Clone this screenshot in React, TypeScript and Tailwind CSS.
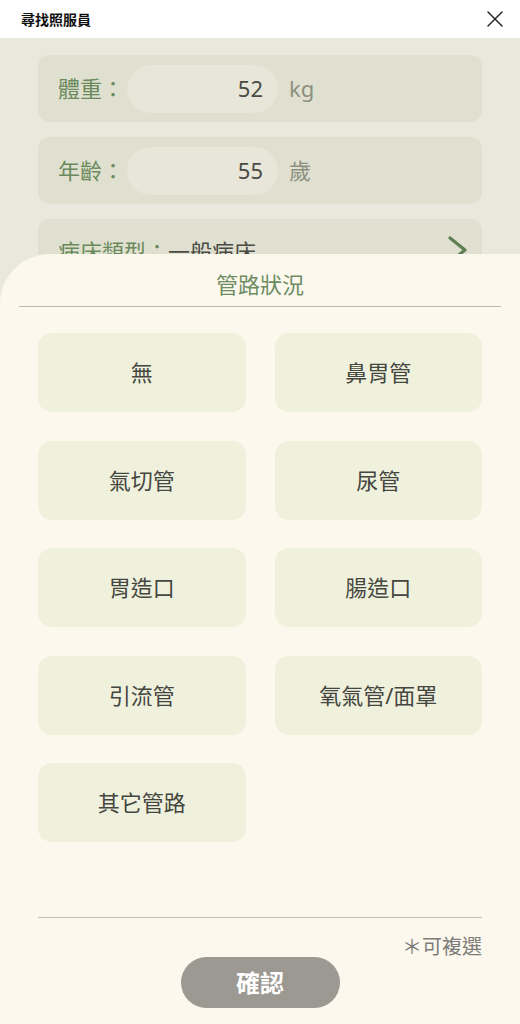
import { X } from "lucide-react";

const font = { fontFamily: '"Noto Sans", "Noto Sans CJK TC", sans-serif' };

const options = ["無", "鼻胃管", "氣切管", "尿管", "胃造口", "腸造口", "引流管", "氧氣管/面罩", "其它管路"];

function InputRow({ label, value, unit }: { label: string; value: string; unit: string }) {
  return (
    <div className="mx-[38px] h-[67px] rounded-xl bg-[#dfe0cf] flex items-center pl-5">
      <span className="text-[22px] text-[#6a8a5c] w-[69px]">{label}</span>
      <div className="w-[151px] h-[48px] rounded-full bg-[#e7e6d8] flex items-center justify-end pr-[15px] text-[22px] text-[#4a4a44]">
        {value}
      </div>
      <span className="ml-[11px] text-[22px] text-[#8d9081]">{unit}</span>
    </div>
  );
}

export default function App() {
  return (
    <div className="relative w-[520px] h-[1024px] overflow-hidden bg-[#e9e8dc]" style={font}>
      <div className="h-[38px] bg-white flex items-center justify-between pl-[21px] pr-[11px]">
        <span className="text-[14px] font-bold text-[#111]">尋找照服員</span>
        <X className="w-7 h-7 text-[#222]" strokeWidth={1.2} />
      </div>

      <div className="pt-[17px] flex flex-col gap-[15px]">
        <InputRow label="體重：" value="52" unit="kg" />
        <InputRow label="年齡：" value="55" unit="歲" />
        <div className="mx-[38px] h-[67px] rounded-xl bg-[#dfe0cf] flex items-start justify-between pl-5 pr-[14px] pt-[14px]">
          <span className="text-[22px] leading-[36px] text-[#6a8a5c]">
            病床類型：<span className="text-[#4a4a44]">一般病床</span>
          </span>
          <svg width="20" height="30" viewBox="0 0 20 30" className="mt-[3px]" fill="none">
            <polyline points="2,2 17,14 2,26" stroke="#5f7f52" strokeWidth="3.2" strokeLinecap="round" strokeLinejoin="round" />
          </svg>
        </div>
      </div>

      <div className="absolute left-0 right-0 top-[254px] bottom-0 bg-[#fcf8ee] rounded-tl-[50px] flex flex-col">
        <div className="pt-[16px] text-center text-[22px] leading-[28px] text-[#6f8d63]">管路狀況</div>
        <div className="mx-[19px] mt-[8px] h-px bg-[#b9bcad]" />
        <div className="mt-[26px] mx-[38px] grid grid-cols-2 gap-x-[29px] gap-y-[28.5px]">
          {options.map((o) => (
            <button
              key={o}
              className="h-[79px] rounded-[14px] bg-[#eff1dd] text-[22px] text-[#45463f]"
            >
              {o}
            </button>
          ))}
        </div>
        <div className="mx-[38px] mt-[75px] h-px bg-[#c0c2b4]" />
        <div className="mx-[38px] mt-[19px] text-right text-[20px] leading-[20px] text-[#7d7c78]">＊可複選</div>
        <button className="mx-auto w-[159px] h-[51px] rounded-full bg-[#9c9892] text-white text-[24px] font-bold">
          確認
        </button>
      </div>
    </div>
  );
}
